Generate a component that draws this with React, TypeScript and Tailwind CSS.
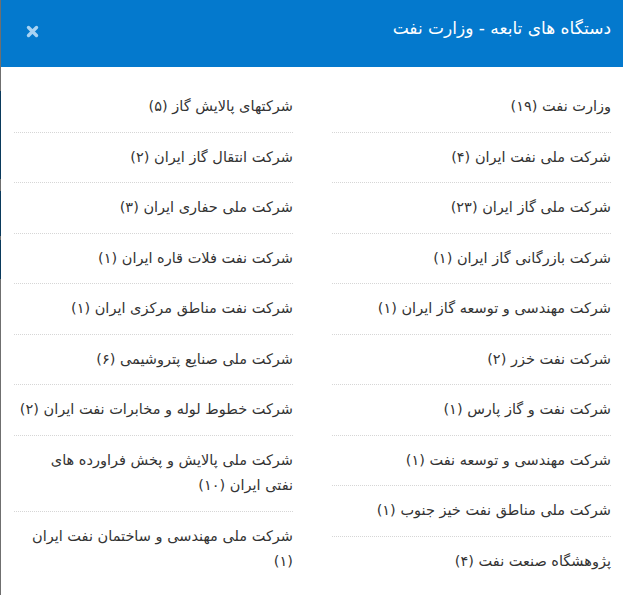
import React from 'react';

const rightItems = [
  'وزارت نفت (۱۹)',
  'شرکت ملی نفت ایران (۴)',
  'شرکت ملی گاز ایران (۲۳)',
  'شرکت بازرگانی گاز ایران (۱)',
  'شرکت مهندسی و توسعه گاز ایران (۱)',
  'شرکت نفت خزر (۲)',
  'شرکت نفت و گاز پارس (۱)',
  'شرکت مهندسی و توسعه نفت (۱)',
  'شرکت ملی مناطق نفت خیز جنوب (۱)',
  'پژوهشگاه صنعت نفت (۴)',
];

const leftItems = [
  'شرکتهای پالایش گاز (۵)',
  'شرکت انتقال گاز ایران (۲)',
  'شرکت ملی حفاری ایران (۳)',
  'شرکت نفت فلات قاره ایران (۱)',
  'شرکت نفت مناطق مرکزی ایران (۱)',
  'شرکت ملی صنایع پتروشیمی (۶)',
  'شرکت خطوط لوله و مخابرات نفت ایران (۲)',
  'شرکت ملی پالایش و پخش فراورده های\nنفتی ایران (۱۰)',
  'شرکت ملی مهندسی و ساختمان نفت ایران (۱)',
];

function Column({ items }: { items: string[] }) {
  return (
    <ul className="flex flex-col">
      {items.map((item) => (
        <li
          key={item}
          className="border-b border-dotted border-[#d6d6d6] py-3 last:border-b-0"
        >
          <a href="#" className="block whitespace-pre-line text-[14.5px] leading-[25.5px] text-[#333]">
            {item}
          </a>
        </li>
      ))}
    </ul>
  );
}

export default function App() {
  return (
    <div className="flex min-h-[595px] bg-white" style={{ fontFamily: '"DejaVu Sans", "Noto Sans", sans-serif' }}>
      {/* backdrop sliver behind the modal */}
      <div className="flex w-px flex-col bg-[#6f6f6f]">
        <div className="h-[91px]" />
        <div className="h-[88px] bg-[#0a3a5c]" />
        <div className="h-[12px]" />
        <div className="h-[45px] bg-[#0a3a5c]" />
        <div className="h-[4px]" />
        <div className="h-[39px] bg-[#0a3a5c]" />
      </div>

      <div dir="rtl" className="flex flex-1 flex-col">
        <header className="flex h-[67px] items-start justify-between bg-[#0479cd] pl-[25px] pr-[12px] pt-[16px]">
          <h4 className="text-[17px] leading-[24px] text-white">دستگاه های تابعه - وزارت نفت</h4>
          <button className="mt-[9px] text-[#a9d3f3]" aria-label="close">
            <svg width="13" height="13" viewBox="0 0 13 13">
              <path d="M2.5 2.5 L10.5 10.5 M10.5 2.5 L2.5 10.5" stroke="currentColor" strokeWidth="3.4" strokeLinecap="round" />
            </svg>
          </button>
        </header>

        <div className="grid grid-cols-2 gap-x-[39px] pl-[13px] pr-[12px] pt-[15px]">
          <Column items={rightItems} />
          <Column items={leftItems} />
        </div>
      </div>
    </div>
  );
}
